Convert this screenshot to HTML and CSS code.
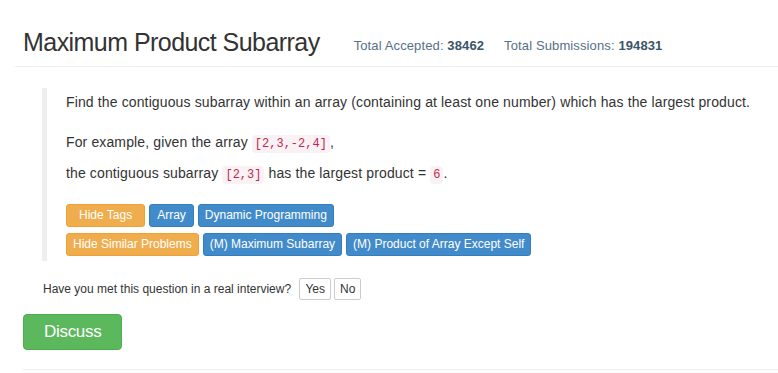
FILE: index.html
```html
<!DOCTYPE html>
<html lang="en">
<head>
    <meta charset="UTF-8">
    <title>Maximum Product Subarray</title>
    <link rel="stylesheet" href="styles.css">
</head>
<body>
    <div class="container">
        <div class="question-title">
            <h3>Maximum Product Subarray</h3>
            <span class="total-ac">Total Accepted: <strong>38462</strong></span>
            <span class="total-submit">Total Submissions: <strong>194831</strong></span>
        </div>

        <div class="question-content">
            <p class="desc">Find the contiguous subarray within an array (containing at least one number) which has the largest product.</p>
            <p class="example">For example, given the array <code>[2,3,-2,4]</code>,</p>
            <p class="example-2">the contiguous subarray <code>[2,3]</code> has the largest product = <code>6</code>.</p>

            <div class="tags first">
                <span class="btn-tag warn hide-tags">Hide Tags</span>
                <a class="btn-tag wide" href="#">Array</a>
                <a class="btn-tag" href="#">Dynamic Programming</a>
            </div>
            <div class="tags">
                <span class="btn-tag warn">Hide Similar Problems</span>
                <a class="btn-tag" href="#">(M) Maximum Subarray</a>
                <a class="btn-tag" href="#">(M) Product of Array Except Self</a>
            </div>
        </div>

        <p class="interview">Have you met this question in a real interview?
            <button class="btn-small">Yes</button><button class="btn-small">No</button>
        </p>

        <a class="btn-discuss" href="#">Discuss</a>
        <hr class="bottom-line">
    </div>
</body>
</html>
```

FILE: styles.css
```css
body {
    margin: 0;
    font-family: "Liberation Sans", Arial, sans-serif;
    font-size: 14px;
    color: #333;
    background: #fff;
}

.container {
    padding: 0 0 0 15px;
}

.question-title {
    display: flex;
    align-items: baseline;
    padding: 28px 0 9px 8px;
    border-bottom: 1px solid #eee;
}

.question-title h3 {
    margin: 0;
    font-size: 25px;
    font-weight: normal;
    letter-spacing: -0.55px;
    margin-right: 34px;
}

.total-ac, .total-submit {
    position: relative;
    top: -1px;
    font-size: 13px;
    letter-spacing: 0.12px;
    color: #56708a;
}

.total-ac {
    margin-right: 20px;
}

.total-ac strong, .total-submit strong {
    color: #3b5466;
}

.question-content {
    margin: 21px 0 0 27px;
    padding: 4px 0 5px 19px;
    border-left: 5px solid #eee;
}

.question-content p {
    margin: 0;
    height: 20px;
    line-height: 20px;
    letter-spacing: 0.13px;
}

.question-content .example {
    margin-top: 20px;
}

.question-content .example-2 {
    margin-top: 11px;
}

code {
    font-family: "Liberation Mono", monospace;
    font-size: 12px;
    line-height: 1;
    letter-spacing: 0;
    color: #c7254e;
    background: #f9f2f4;
    padding: 2px 3px;
    border-radius: 4px;
}

.tags {
    display: flex;
    gap: 4px;
    margin-top: 6px;
}

.tags.first {
    margin-top: 21px;
}

.btn-tag {
    font-size: 12px;
    color: #fff;
    text-decoration: none;
    background: #428bca;
    border: 1px solid #357ebd;
    border-radius: 3px;
    padding: 3px 6px 4px;
    line-height: 14px;
}

.btn-tag.wide {
    padding: 3px 7px 4px;
}

.btn-tag.warn {
    background: #f0ad4e;
    border-color: #eea236;
}

.btn-tag.hide-tags {
    padding: 3px 12px 4px;
}

.interview {
    margin: 17px 0 0 28px;
    font-size: 12px;
    line-height: 21px;
}

.btn-small {
    font-family: inherit;
    font-size: 12px;
    color: #333;
    background: #fff;
    border: 1px solid #ccc;
    border-radius: 2px;
    padding: 3px 5px;
    margin-left: 3px;
}

.btn-small:first-child {
    margin-left: 5px;
}

.btn-discuss {
    display: inline-block;
    margin: 14px 0 0 8px;
    font-size: 17px;
    letter-spacing: -0.3px;
    line-height: 20px;
    color: #fff;
    text-decoration: none;
    background: #5cb85c;
    border: 1px solid #4cae4c;
    border-radius: 4px;
    padding: 7px 20px;
}

.bottom-line {
    margin: 19px 0 0 8px;
    border: 0;
    border-top: 1px solid #eee;
}
```
